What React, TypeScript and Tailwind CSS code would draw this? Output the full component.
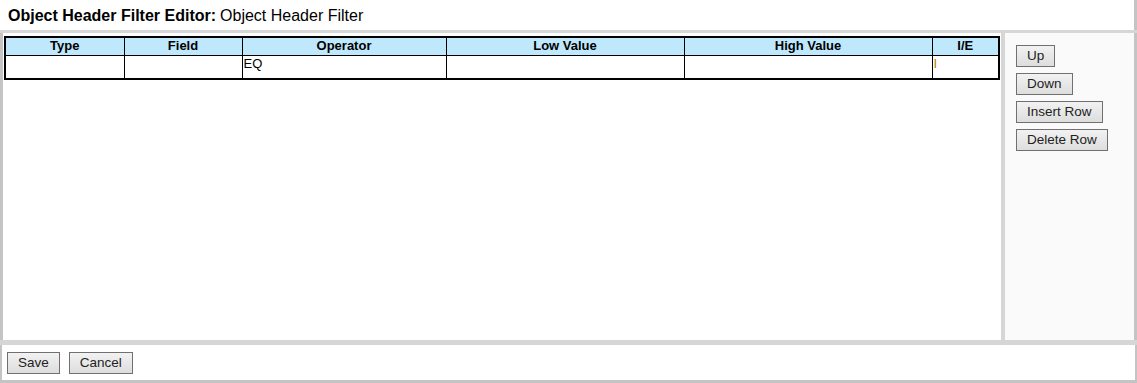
import React from "react"

const columns = [
  { label: "Type", w: "w-[119px]" },
  { label: "Field", w: "w-[118px]" },
  { label: "Operator", w: "w-[204px]" },
  { label: "Low Value", w: "w-[238px]" },
  { label: "High Value", w: "w-[248px]" },
  { label: "I/E", w: "" },
]

function Btn({ children }: { children: React.ReactNode }) {
  return (
    <button className="h-[22px] border border-[#707070] bg-[linear-gradient(#f2f2f2,#dddddd)] px-[10px] text-[13.5px] leading-none text-[#222]">
      {children}
    </button>
  )
}

export default function App() {
  return (
    <div className="flex h-[383px] w-[1137px] flex-col bg-[#c4c4c4] font-['Liberation_Sans',Arial,sans-serif] text-black">
      {/* header */}
      <div className="mr-[3px] flex h-[30px] items-center bg-white px-[8px] pt-[1px] text-[16px]">
        <span className="font-bold">Object Header Filter Editor:</span>
        <span className="ml-[4px]">Object Header Filter</span>
      </div>
      <div className="h-[3px] bg-[#d6d6d6]" />

      {/* body */}
      <div className="flex h-[307px] border-l-[3px] border-r-[3px] border-[#c4c4c4]">
        <div className="flex-1 bg-white px-[1px] pt-[3px]">
          <table className="w-[996px] table-fixed border-collapse border-2 border-black text-[13px]">
            <thead>
              <tr className="h-[18px] bg-[#bfe8fd]">
                {columns.map((c) => (
                  <th key={c.label} className={`${c.w} border border-black p-0 text-center font-bold leading-[16px]`}>
                    {c.label}
                  </th>
                ))}
              </tr>
            </thead>
            <tbody>
              <tr className="h-[24px] align-top">
                <td className="border border-black p-0" />
                <td className="border border-black p-0" />
                <td className="border border-black px-[1px] py-0 leading-[16px]">EQ</td>
                <td className="border border-black p-0" />
                <td className="border border-black p-0" />
                <td className="border border-black px-[1px] py-0 leading-[16px] text-[#c07a00]">I</td>
              </tr>
            </tbody>
          </table>
        </div>
        <div className="w-[4px] bg-[#d6d6d6]" />
        <div className="flex w-[129px] flex-col items-start gap-[6px] bg-[#fafafa] pl-[11px] pt-[12px]">
          <Btn>Up</Btn>
          <Btn>Down</Btn>
          <Btn>Insert Row</Btn>
          <Btn>Delete Row</Btn>
        </div>
      </div>

      <div className="h-[5px] bg-[#d6d6d6]" />

      {/* footer */}
      <div className="mx-[2px] flex h-[35px] items-center gap-[9px] bg-white pl-[5px]">
        <Btn>Save</Btn>
        <Btn>Cancel</Btn>
      </div>
    </div>
  )
}
